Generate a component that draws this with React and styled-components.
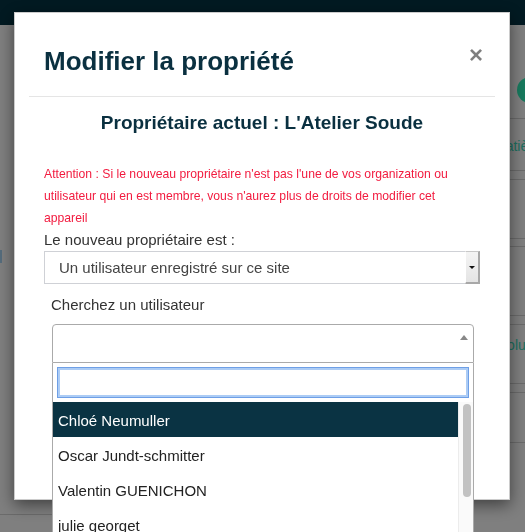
import React from 'react';
import styled, { createGlobalStyle } from 'styled-components';

const GlobalStyle = createGlobalStyle`
  html, body { margin: 0; padding: 0; height: 100%; overflow: hidden; background: #fff; }
  body { font-family: "Liberation Sans", Arial, sans-serif; }
  *, *::before, *::after { box-sizing: border-box; }
`;

/* ---------- page behind the modal ---------- */
const Page = styled.div`
  height: 532px;
  display: flex;
  flex-direction: column;
`;
const TopBar = styled.header`
  height: 25px;
  flex-shrink: 0;
  background: #043444;
`;
const Main = styled.div`
  flex: 1;
  display: flex;
  justify-content: space-between;
`;
const LeftColumn = styled.div`
  width: 60px;
  display: flex;
  flex-direction: column;
`;
const RightColumn = styled.div`
  width: 85px;
  display: flex;
  flex-direction: column;
`;
const Band = styled.div`
  height: ${(p) => p.$h}px;
  flex-shrink: 0;
  display: flex;
  align-items: flex-start;
  padding-top: ${(p) => p.$pt || 0}px;
  padding-left: ${(p) => p.$pl || 0}px;
  border-bottom: ${(p) => (p.$line ? '1px solid #d6d6d6' : 'none')};
`;
const Mark = styled.div`
  width: 2px;
  height: 13px;
  background: #aad8f8;
`;
const RoundButton = styled.div`
  width: 26px;
  height: 26px;
  border-radius: 50%;
  background: #30f4bc;
  margin: 52px -18px 0 auto;
`;
const LinkText = styled.span`
  font-size: 14px;
  line-height: 20px;
  color: #3ee0c0;
  white-space: nowrap;
`;

/* ---------- modal ---------- */
const ModalLayer = styled.div`
  position: fixed;
  inset: 0;
  overflow: hidden;
  background: rgba(0, 0, 0, 0.5);
`;
const Modal = styled.div`
  width: 496px;
  min-height: 488px;
  margin: 12px 0 0 14px;
  padding: 14px;
  background: #fff;
  border: 1px solid rgba(0, 0, 0, 0.2);
  box-shadow: 0 5px 15px rgba(0, 0, 0, 0.5);
`;
const Header = styled.div`
  display: flex;
  justify-content: space-between;
  align-items: flex-start;
  padding: 15px;
  border-bottom: 1px solid #e5e5e5;
`;
const Title = styled.h4`
  margin: 0;
  font-size: 26px;
  line-height: 39px;
  font-weight: 700;
  color: #0a3040;
`;
const CloseButton = styled.button`
  margin: 1px -3px 0 0;
  padding: 0;
  border: 0;
  background: none;
  font-family: "Liberation Sans", Arial, sans-serif;
  font-size: 24px;
  font-weight: 700;
  line-height: 1;
  color: #000;
  opacity: 0.5;
  cursor: pointer;
`;
const Body = styled.div`
  padding: 15px;
  display: flex;
  flex-direction: column;
`;
const OwnerHeading = styled.h3`
  margin: 0;
  font-size: 19px;
  line-height: 21px;
  font-weight: 700;
  text-align: center;
  color: #0a3040;
`;
const Warning = styled.p`
  margin: 30px 0 0;
  font-size: 12.2px;
  line-height: 22px;
  color: #f21b3f;
`;
const FieldLabel = styled.label`
  display: block;
  margin-top: ${(p) => p.$mt}px;
  padding-left: ${(p) => p.$pl || 0}px;
  font-size: 15px;
  line-height: 20px;
  color: #333;
`;
const NativeSelect = styled.div`
  margin-top: 1px;
  height: 33px;
  display: flex;
  align-items: center;
  border: 1px solid #cfd1d6;
  background: #fff;
`;
const NativeValue = styled.span`
  flex: 1;
  padding-left: 14px;
  font-size: 15px;
  color: #444;
  white-space: nowrap;
`;
const NativeArrow = styled.span`
  align-self: stretch;
  width: 15px;
  margin: -1px -1px -1px 0;
  display: flex;
  align-items: center;
  justify-content: center;
  background: linear-gradient(#f4f4f4, #e4e4e4);
  border-left: 1px solid #fff;
  border-right: 2px solid #a8a8a8;
  border-bottom: 2px solid #a8a8a8;
  border-top: 1px solid #c8c8c8;
  &::after {
    content: '';
    border-style: solid;
    border-width: 3px 3px 0 3px;
    border-color: #111 transparent transparent transparent;
  }
`;
const Combo = styled.div`
  position: relative;
  margin: 9px 6px 0 8px;
`;
const Selection = styled.div`
  height: 39px;
  display: flex;
  justify-content: flex-end;
  align-items: flex-start;
  padding: 10px 5px 0 0;
  border: 1px solid #aaa;
  border-radius: 4px 4px 0 0;
  background: #fff;
`;
const CaretUp = styled.span`
  width: 0;
  height: 0;
  border-style: solid;
  border-width: 0 4px 5px 4px;
  border-color: transparent transparent #888 transparent;
`;
const Dropdown = styled.div`
  position: absolute;
  top: 100%;
  left: 0;
  right: 0;
  background: #fff;
  border: 1px solid #aaa;
  border-top: none;
`;
const SearchBox = styled.div`
  padding: 4px;
`;
const SearchInput = styled.input`
  display: block;
  width: 100%;
  height: 31px;
  margin: 0;
  padding: 0 6px;
  font-family: "Liberation Sans", Arial, sans-serif;
  font-size: 15px;
  border: 1px solid #6e9fe6;
  box-shadow: inset 0 0 0 2px #acccf5;
  outline: none;
  background: #fff;
`;
const Results = styled.div`
  display: flex;
  max-height: 200px;
  overflow: hidden;
`;
const ResultList = styled.ul`
  flex: 1;
  margin: 0;
  padding: 0;
  list-style: none;
`;
const ResultItem = styled.li`
  height: 35px;
  padding: 2px 5px 0;
  font-size: 15px;
  line-height: 33px;
  white-space: nowrap;
  color: ${(p) => (p.$active ? '#fff' : '#222')};
  background: ${(p) => (p.$active ? '#0a3343' : 'transparent')};
`;
const ScrollTrack = styled.div`
  width: 15px;
  flex-shrink: 0;
  padding: 2px 2px 0 4px;
  background: #fafafa;
  border-left: 1px solid #ececec;
`;
const ScrollThumb = styled.div`
  height: 93px;
  border-radius: 4px;
  background: #c2c2c2;
`;

const users = ['Chloé Neumuller', 'Oscar Jundt-schmitter', 'Valentin GUENICHON', 'julie georget'];

export default function App() {
  return (
    <>
      <GlobalStyle />
      <Page>
        <TopBar />
        <Main>
          <LeftColumn>
            <Band $h={225} />
            <Mark />
            <Band $h={252} $line />
          </LeftColumn>
          <RightColumn>
            <Band $h={94} $line>
              <RoundButton />
            </Band>
            <Band $h={52} $line $pt={17} $pl={54}>
              <LinkText>Matière</LinkText>
            </Band>
            <Band $h={9} $line />
            <Band $h={59} $line />
            <Band $h={8} $line />
            <Band $h={69} $line />
            <Band $h={9} $line />
            <Band $h={59} $line $pt={10} $pl={43}>
              <LinkText>Absolue</LinkText>
            </Band>
            <Band $h={9} $line />
            <Band $h={50} $line />
          </RightColumn>
        </Main>
      </Page>

      <ModalLayer>
        <Modal>
          <Header>
            <Title>Modifier la propriété</Title>
            <CloseButton aria-label="Fermer">×</CloseButton>
          </Header>
          <Body>
            <OwnerHeading>Propriétaire actuel : L'Atelier Soude</OwnerHeading>
            <Warning>
              Attention : Si le nouveau propriétaire n'est pas l'une de vos organization ou
              utilisateur qui en est membre, vous n'aurez plus de droits de modifier cet appareil
            </Warning>
            <FieldLabel $mt={1}>Le nouveau propriétaire est :</FieldLabel>
            <NativeSelect>
              <NativeValue>Un utilisateur enregistré sur ce site</NativeValue>
              <NativeArrow />
            </NativeSelect>
            <FieldLabel $mt={11} $pl={7}>Cherchez un utilisateur</FieldLabel>
            <Combo>
              <Selection>
                <CaretUp />
              </Selection>
              <Dropdown>
                <SearchBox>
                  <SearchInput type="search" />
                </SearchBox>
                <Results>
                  <ResultList>
                    {users.map((u, i) => (
                      <ResultItem key={u} $active={i === 0}>
                        {u}
                      </ResultItem>
                    ))}
                  </ResultList>
                  <ScrollTrack>
                    <ScrollThumb />
                  </ScrollTrack>
                </Results>
              </Dropdown>
            </Combo>
          </Body>
        </Modal>
      </ModalLayer>
    </>
  );
}
